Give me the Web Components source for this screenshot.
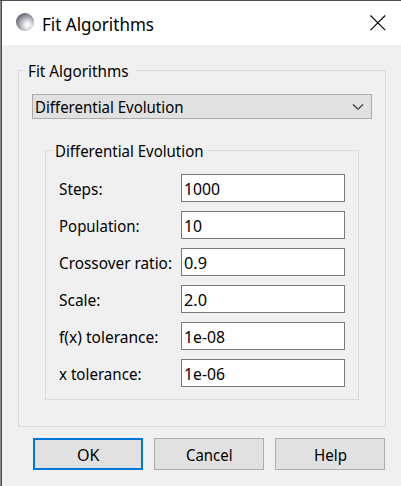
<!DOCTYPE html>
<html lang="en">
<head>
<meta charset="utf-8">
<title>Fit Algorithms</title>
<style>
html,body{margin:0;height:100%;overflow:hidden}
body{font-family:"Noto Sans","Open Sans",sans-serif;font-size:16px;color:#000;background:#f0f0f0}
</style>
</head>
<body>
<fit-dialog></fit-dialog>
<script>
const define = (name, render) => customElements.define(name, class extends HTMLElement {
  connectedCallback() {
    if (this.shadowRoot) return;
    this.attachShadow({mode: 'open'}).innerHTML = render(this);
  }
});

/* One line of text fitted to an advance width; "base" is the baseline offset. */
define('ui-text', el => {
  const w = el.getAttribute('w'), base = el.getAttribute('base') || 16, size = el.getAttribute('size') || 16;
  return `<style>:host{display:block;width:${w}px;height:21px;flex:none}svg{display:block;overflow:visible}</style>
  <svg width="${w}" height="21"><text x="0" y="${base}" font-size="${size}" textLength="${w}" lengthAdjust="spacingAndGlyphs" fill="#000">${el.getAttribute('text')}</text></svg>`;
});

define('title-bar', () => `
<style>
:host{display:flex;align-items:center;height:44px;background:#fff;padding:0 15px 0 14px;box-sizing:border-box}
svg{display:block;flex:none}
.icon{margin-bottom:1px}
ui-text{margin-left:7px}
.close{margin-left:auto}
</style>
<svg class="icon" width="19" height="19" viewBox="0 0 19 19"><defs><radialGradient id="g" gradientUnits="userSpaceOnUse" cx="11.5" cy="12" r="13.5">
<stop offset="0" stop-color="#fff"/><stop offset=".2" stop-color="#eeedf1"/><stop offset=".55" stop-color="#aeadb4"/><stop offset=".85" stop-color="#74727d"/><stop offset="1" stop-color="#555260"/></radialGradient></defs>
<circle cx="9" cy="9" r="9" fill="url(#g)"/></svg>
<ui-text text="Fit Algorithms" w="112" size="17.5" base="17.5"></ui-text>
<svg class="close" width="16" height="16" viewBox="0 0 16 16"><path d="M.5 .5L15.2 15.2M15.2 .5L.5 15.2" stroke="#000" stroke-width="1.1" fill="none"/></svg>`);

define('group-box', el => `
<style>
:host{display:block}
fieldset{box-sizing:border-box;height:100%;min-width:0;margin:0;padding:13px 13px 0;border:1px solid #dcdcdc}
legend{display:block;box-sizing:border-box;height:21px;padding:0 0 0 1.5px;margin-left:calc(7px - 13px);width:${el.getAttribute('gap')}px}
</style>
<fieldset><legend><ui-text text="${el.getAttribute('label')}" w="${el.getAttribute('w')}" base="17"></ui-text></legend><slot></slot></fieldset>`);

define('combo-box', el => `
<style>
:host{display:flex;box-sizing:border-box;width:340px;height:25px;padding:0 7px 0 2px;align-items:center;justify-content:space-between;background:#e1e1e1;border:1px solid #adadad}
</style>
<ui-text text="${el.getAttribute('value')}" w="148.5" base="17"></ui-text>
<svg width="12" height="8" viewBox="0 0 12 8"><path d="M1 1.5L6 6.2L11 1.5" fill="none" stroke="#3c3c3c" stroke-width="1.2"/></svg>`);

define('form-row', el => `
<style>
:host{display:grid;grid-template-columns:122px 164px;height:28px;margin-bottom:9px;align-items:center}
.in{display:flex;align-items:center;box-sizing:border-box;height:28px;padding-left:2px;background:#fff;border:1px solid #7a7a7a}
</style>
<ui-text text="${el.getAttribute('label')}" w="${el.getAttribute('w')}" base="17"></ui-text>
<div class="in"><ui-text text="${el.getAttribute('value')}" w="${el.getAttribute('vw')}" base="17"></ui-text></div>`);

define('push-button', el => `
<style>
:host{display:flex;box-sizing:border-box;width:110px;height:32px;align-items:center;justify-content:center;background:#e1e1e1;border:1px solid #adadad}
:host([primary]){border:2px solid #0078d7}
</style>
<ui-text text="${el.getAttribute('label')}" w="${el.getAttribute('w')}" base="17"></ui-text>`);

define('fit-dialog', () => `
<style>
:host{display:block;box-sizing:border-box;width:401px;height:486px;background:linear-gradient(90deg,#8a8a8a 1px,#4c4c4c 1px) 0 0/2px 100% no-repeat,#f0f0f0;border-top:1px solid #4c4c4c;padding-left:2px}
.outer{width:368px;height:367px;margin:15px 0 0 16px}
.inner{width:314px;height:260px;margin:21px 0 0 13px}
.buttons{display:flex;gap:11px;margin:11px 0 0 31px}
form-row ,push-button{position:static}
</style>
<title-bar></title-bar>
<group-box class="outer" label="Fit Algorithms" w="100.5" gap="110">
  <combo-box value="Differential Evolution"></combo-box>
  <group-box class="inner" label="Differential Evolution" w="148.5" gap="153">
    <form-row label="Steps:" w="43.5" value="1000" vw="36"></form-row>
    <form-row label="Population:" w="80.5" value="10" vw="18"></form-row>
    <form-row label="Crossover ratio:" w="113" value="0.9" vw="23"></form-row>
    <form-row label="Scale:" w="41.5" value="2.0" vw="23"></form-row>
    <form-row label="f(x) tolerance:" w="99.5" value="1e-08" vw="41"></form-row>
    <form-row label="x tolerance:" w="82.5" value="1e-06" vw="41"></form-row>
  </group-box>
</group-box>
<div class="buttons">
  <push-button primary label="OK" w="22.5"></push-button>
  <push-button label="Cancel" w="46.5"></push-button>
  <push-button label="Help" w="33"></push-button>
</div>`);
</script>
</body>
</html>
